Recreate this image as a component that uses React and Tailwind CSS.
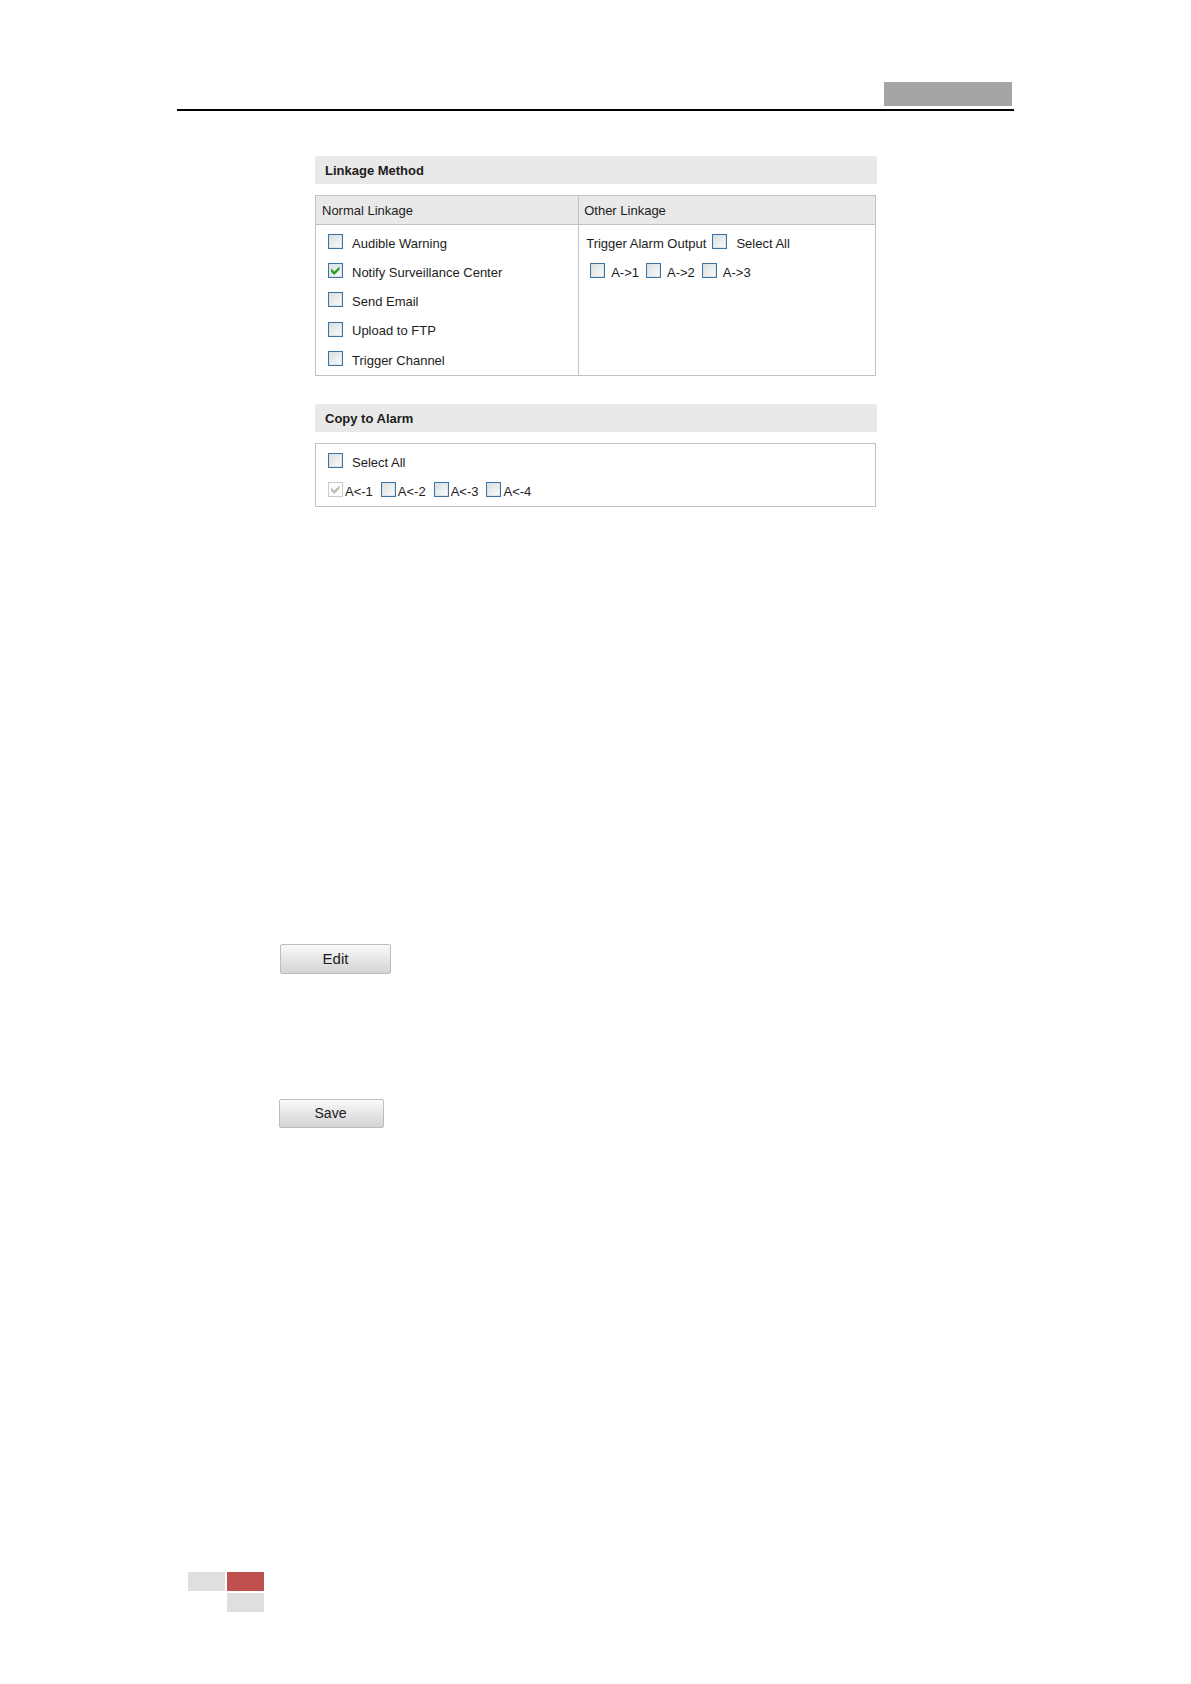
import React from "react";

function CheckBox({ label, gap = "gap-[9px]", checked = false, disabled = false }) {
  return (
    <label className={`inline-flex items-center ${gap}`}>
      <span className="relative mb-1 grid size-[15px] shrink-0">
        <input
          type="checkbox"
          defaultChecked={checked}
          disabled={disabled}
          className="peer size-[15px] appearance-none border border-[#41729f] bg-linear-to-br from-[#dcdedb] to-[#fbfcfc] shadow-[inset_0_0_0_1px_#d5e6f2] disabled:border-[#cbcac3] disabled:from-white disabled:shadow-none"
        />
        <svg
          viewBox="0 0 15 15"
          className="pointer-events-none absolute inset-0 hidden size-[15px] text-[#27a027] peer-checked:block peer-disabled:text-[#bdbdb4]"
        >
          <path d="M3 5.5v3.2L6.2 12l5.3-5.3V3.4L6.2 8.6z" fill="currentColor" />
        </svg>
      </span>
      <span>{label}</span>
    </label>
  );
}

function SectionTitle({ children }) {
  return <h2 className="bg-[#e9e9e9] px-[10px] pt-[2px] leading-[26px] font-bold">{children}</h2>;
}

const normalLinkage = [
  { label: "Audible Warning" },
  { label: "Notify Surveillance Center", checked: true },
  { label: "Send Email" },
  { label: "Upload to FTP" },
  { label: "Trigger Channel" },
];

export default function App() {
  return (
    <div className="min-h-screen bg-white font-['Liberation_Sans',Arial,sans-serif] text-[13px] text-[#1c1c1c]">
      <div className="mx-auto flex min-h-screen max-w-[837px] flex-col pt-[82px] pb-[72px]">
        <header className="flex justify-end border-b-2 border-black pr-[2px] pb-[3px]">
          <div className="h-6 w-32 bg-[#a5a5a5]" />
        </header>

        <main>
          <div className="mt-[45px] ml-[138px] max-w-[562px]">
            <section>
              <SectionTitle>Linkage Method</SectionTitle>
              <div className="mt-[11px] mr-px">
                <table className="w-full border-collapse border border-[#c2c2c2]">
                  <thead>
                    <tr className="h-[29px] bg-[#e9e9e9] text-left">
                      <th className="w-[47%] border border-[#c2c2c2] px-[6px] pt-[2px] font-normal">Normal Linkage</th>
                      <th className="border border-[#c2c2c2] px-[5px] pt-[2px] font-normal">Other Linkage</th>
                    </tr>
                  </thead>
                  <tbody>
                    <tr>
                      <td className="border border-[#c2c2c2] pt-1 pl-3 align-top">
                        <div className="grid h-[146px] grid-rows-5">
                          {normalLinkage.map((item) => (
                            <CheckBox key={item.label} {...item} />
                          ))}
                        </div>
                      </td>
                      <td className="border border-[#c2c2c2] pt-1 pl-[7px] align-top">
                        <div className="flex h-[29px] items-center gap-[6px]">
                          <span>Trigger Alarm Output</span>
                          <CheckBox label="Select All" />
                        </div>
                        <div className="flex h-[29px] items-center gap-[7px] pl-1">
                          <CheckBox label="A->1" gap="gap-[6px]" />
                          <CheckBox label="A->2" gap="gap-[6px]" />
                          <CheckBox label="A->3" gap="gap-[6px]" />
                        </div>
                      </td>
                    </tr>
                  </tbody>
                </table>
              </div>
            </section>

            <section className="mt-7">
              <SectionTitle>Copy to Alarm</SectionTitle>
              <div className="mt-[11px] mr-px border border-[#c2c2c2] pt-1 pl-3">
                <div className="flex h-[29px] items-center">
                  <CheckBox label="Select All" />
                </div>
                <div className="flex h-[29px] items-center gap-2">
                  <CheckBox label="A<-1" gap="gap-[2px]" checked disabled />
                  <CheckBox label="A<-2" gap="gap-[2px]" />
                  <CheckBox label="A<-3" gap="gap-[2px]" />
                  <CheckBox label="A<-4" gap="gap-[2px]" />
                </div>
              </div>
            </section>
          </div>

          <div className="mt-[437px] ml-[102px] flex flex-col items-start gap-[125px]">
            <button
              type="button"
              className="ml-px h-[30px] w-[111px] rounded-[2px] border border-[#bdbdbd] bg-linear-to-b from-[#fafafa] to-[#d3d3d3] text-[15px]"
            >
              Edit
            </button>
            <button
              type="button"
              className="h-[29px] w-[105px] rounded-[2px] border border-[#bdbdbd] bg-linear-to-b from-[#fafafa] to-[#d3d3d3] pr-[2px] text-[14px]"
            >
              Save
            </button>
          </div>
        </main>

        <footer className="mt-auto ml-[11px] grid grid-cols-[37px_37px] grid-rows-[19px_19px] gap-[2px]">
          <div className="bg-[#dfdfdf]" />
          <div className="bg-[#c0504d]" />
          <div className="col-start-2 bg-[#dfdfdf]" />
        </footer>
      </div>
    </div>
  );
}
